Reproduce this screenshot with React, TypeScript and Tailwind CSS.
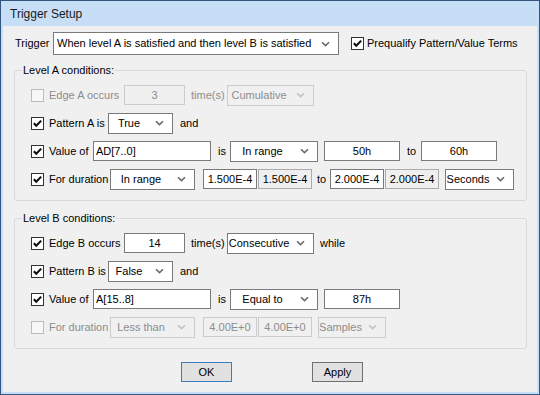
import React from 'react';

const Chevron: React.FC<{ disabled?: boolean }> = ({ disabled }) => (
  <svg width="9" height="6" viewBox="0 0 9 6" className="shrink-0">
    <path d="M1 1.2 L4.5 4.6 L8 1.2" fill="none" stroke={disabled ? '#c2c2c2' : '#6a6a6a'} strokeWidth="1.6" />
  </svg>
);

const Check: React.FC<{ checked?: boolean; disabled?: boolean }> = ({ checked, disabled }) => (
  <div className={`w-[13px] h-[13px] shrink-0 border flex items-center justify-center ${disabled ? 'border-[#bcbcbc] bg-[#f7f7f7]' : 'border-[#333333] bg-white'}`}>
    {checked && (
      <svg width="11" height="11" viewBox="0 0 11 11">
        <path d="M1.8 5.2 L4.3 7.8 L9.2 2.6" fill="none" stroke="#111" strokeWidth="2.1" />
      </svg>
    )}
  </div>
);

const Select: React.FC<{ value: string; w: string; disabled?: boolean; left?: boolean; className?: string }> = ({ value, w, disabled, left, className = '' }) => (
  <div className={`${w} h-[21px] shrink-0 border flex items-center pr-[8px] ${disabled ? 'border-[#cccccc] bg-[#f0f0f0] text-[#8d8d8d]' : 'border-[#7a7a7a] bg-white text-black'} ${className}`}>
    <span className={`flex-1 whitespace-nowrap overflow-hidden ${left ? 'pl-[3px] text-left' : 'text-center pr-[6px]'}`}>{value}</span>
    <Chevron disabled={disabled} />
  </div>
);

const Box: React.FC<{ value: string; w: string; kind?: 'normal' | 'grey' | 'disabled'; left?: boolean; className?: string }> = ({ value, w, kind = 'normal', left, className = '' }) => {
  const look =
    kind === 'grey'
      ? 'border-[#acacac] bg-[#efefef] text-black'
      : kind === 'disabled'
      ? 'border-[#cccccc] bg-[#f0f0f0] text-[#8d8d8d]'
      : 'border-[#7a7a7a] bg-white text-black';
  return (
    <div className={`${w} h-[20px] shrink-0 border flex items-center whitespace-nowrap ${left ? 'pl-[2px]' : 'justify-center'} ${look} ${className}`}>
      {value}
    </div>
  );
};

const CheckLabel: React.FC<{ label: string; w: string; checked?: boolean; disabled?: boolean }> = ({ label, w, checked, disabled }) => (
  <div className={`${w} shrink-0 flex items-center gap-[5px]`}>
    <Check checked={checked} disabled={disabled} />
    <span className={disabled ? 'text-[#8d8d8d]' : ''}>{label}</span>
  </div>
);

const Group: React.FC<{ title: string; className?: string; children: React.ReactNode }> = ({ title, className = '', children }) => (
  <div className={`relative ml-[11px] w-[513px] h-[131px] border border-[#d9d9d9] rounded-[3px] pt-[10px] pl-[16px] ${className}`}>
    <span className="absolute -top-[7px] left-[7px] px-[1px] bg-[#f0f0f0] leading-[13px]">{title}</span>
    {children}
  </div>
);

const Row: React.FC<{ children: React.ReactNode }> = ({ children }) => (
  <div className="h-[28px] flex items-center">{children}</div>
);

export default function App() {
  return (
    <div className="w-[540px] h-[395px] border border-[#34567e] bg-[#c7dff6] flex flex-col font-['Liberation_Sans',Arial,sans-serif] text-[11px] text-black">
      <div className="h-[25px] shrink-0 flex items-center pl-[9px] text-[12px] text-[#1a1a1a]">Trigger Setup</div>
      <div className="mx-[2px] mb-[2px] flex-1 bg-[#f0f0f0] flex flex-col">
        <div className="mt-[6px] h-[23px] flex items-center">
          <span className="pl-[12px] w-[50px] shrink-0">Trigger</span>
          <Select value="When level A is satisfied and then level B is satisfied" w="w-[286px]" left className="h-[23px]" />
          <div className="ml-[12px] flex items-center gap-[3px]">
            <Check checked />
            <span>Prequalify Pattern/Value Terms</span>
          </div>
        </div>

        <Group title="Level A conditions:" className="mt-[15px]">
          <Row>
            <CheckLabel label="Edge A occurs" w="w-[93px]" disabled />
            <Box value="3" w="w-[61px]" kind="disabled" />
            <span className="ml-[6px] w-[36px] text-[#8d8d8d]">time(s)</span>
            <Select value="Cumulative" w="w-[87px]" disabled />
          </Row>
          <Row>
            <CheckLabel label="Pattern A is" w="w-[77px]" checked />
            <Select value="True" w="w-[65px]" />
            <span className="ml-[7px]">and</span>
          </Row>
          <Row>
            <CheckLabel label="Value of" w="w-[62px]" checked />
            <Box value="AD[7..0]" w="w-[118px]" left />
            <span className="ml-[7px] w-[12px]">is</span>
            <Select value="In range" w="w-[88px]" />
            <Box value="50h" w="w-[76px]" className="ml-[6px]" />
            <span className="ml-[7px] w-[14px]">to</span>
            <Box value="60h" w="w-[76px]" />
          </Row>
          <Row>
            <CheckLabel label="For duration" w="w-[79px]" checked />
            <Select value="In range" w="w-[85px]" />
            <Box value="1.500E-4" w="w-[54px]" className="ml-[8px]" />
            <Box value="1.500E-4" w="w-[54px]" kind="grey" className="ml-[1px]" />
            <span className="ml-[5px] w-[13px]">to</span>
            <Box value="2.000E-4" w="w-[54px]" />
            <Box value="2.000E-4" w="w-[54px]" kind="grey" className="ml-[1px]" />
            <Select value="Seconds" w="w-[69px]" className="ml-[6px]" />
          </Row>
        </Group>

        <Group title="Level B conditions:" className="mt-[17px]">
          <Row>
            <CheckLabel label="Edge B occurs" w="w-[93px]" checked />
            <Box value="14" w="w-[61px]" />
            <span className="ml-[6px] w-[36px]">time(s)</span>
            <Select value="Consecutive" w="w-[87px]" />
            <span className="ml-[6px]">while</span>
          </Row>
          <Row>
            <CheckLabel label="Pattern B is" w="w-[77px]" checked />
            <Select value="False" w="w-[65px]" />
            <span className="ml-[7px]">and</span>
          </Row>
          <Row>
            <CheckLabel label="Value of" w="w-[62px]" checked />
            <Box value="A[15..8]" w="w-[118px]" left />
            <span className="ml-[7px] w-[12px]">is</span>
            <Select value="Equal to" w="w-[88px]" />
            <Box value="87h" w="w-[76px]" className="ml-[6px]" />
          </Row>
          <Row>
            <CheckLabel label="For duration" w="w-[79px]" disabled />
            <Select value="Less than" w="w-[85px]" disabled />
            <Box value="4.00E+0" w="w-[54px]" kind="disabled" className="ml-[8px]" />
            <Box value="4.00E+0" w="w-[54px]" kind="disabled" className="ml-[1px]" />
            <Select value="Samples" w="w-[68px]" disabled className="ml-[6px]" />
          </Row>
        </Group>

        <div className="mt-[13px] flex">
          <button className="ml-[178px] w-[51px] h-[20px] border border-[#3b7dbb] bg-[#e1e1e1] text-[11px] leading-none">OK</button>
          <button className="ml-[80px] w-[51px] h-[20px] border border-[#707070] bg-[#e1e1e1] text-[11px] leading-none">Apply</button>
        </div>
      </div>
    </div>
  );
}
